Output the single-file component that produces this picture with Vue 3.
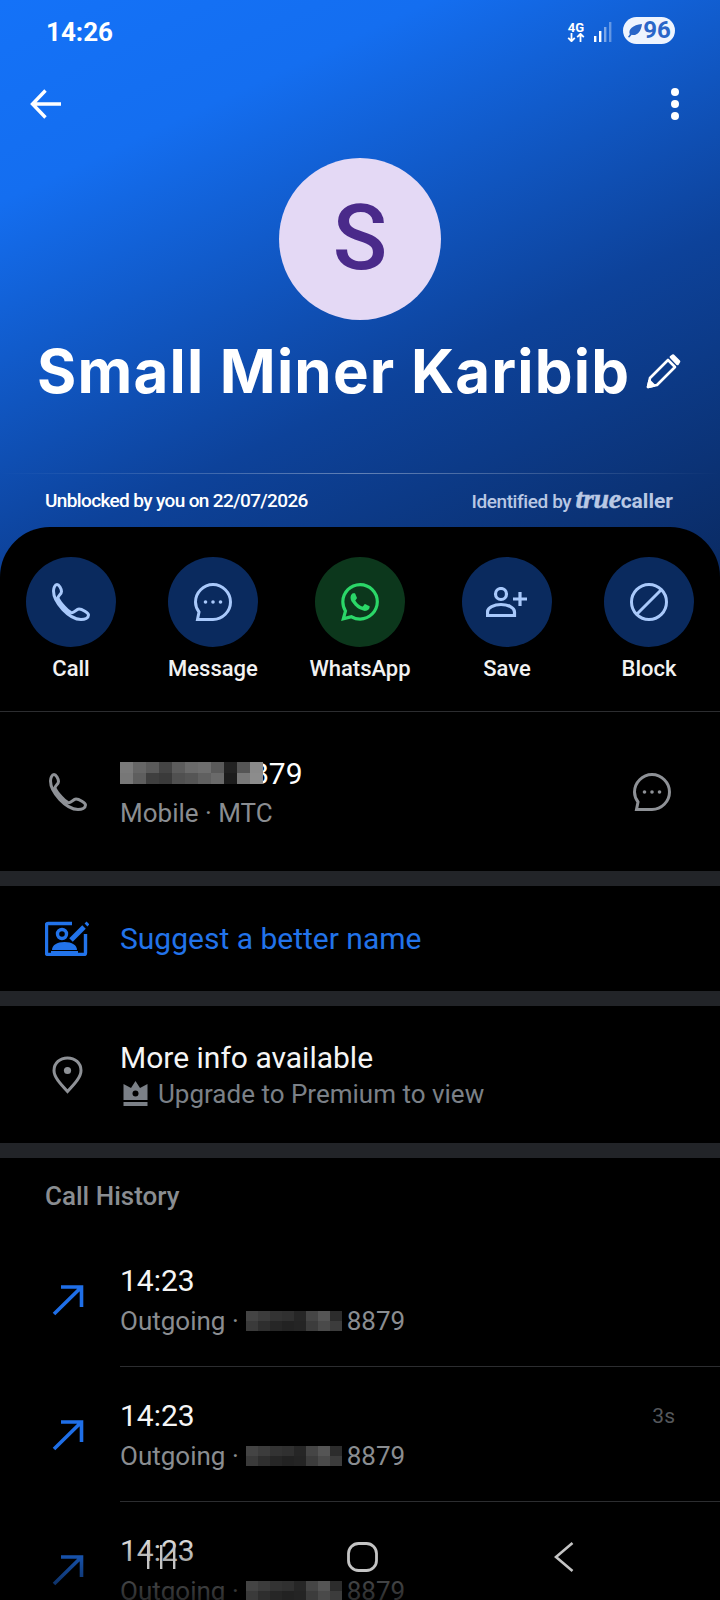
<template>
  <div class="screen">
    <header class="hero">
      <div class="status">
        <span class="clock">14:26</span>
        <div class="status-right">
          <div class="net">
            <span>4G</span>
            <svg width="18" height="9" viewBox="0 0 18 9" fill="none" stroke="#fff" stroke-width="1.8">
              <path d="M4.5 0v8M1.2 4.8l3.3 3.4 3.3-3.4M13.5 9V1M10.2 4.2l3.3-3.4 3.3 3.4" />
            </svg>
          </div>
          <svg class="signal" width="18" height="20" viewBox="0 0 18 20" fill="#fff">
            <rect x="0" y="14" width="2.4" height="6" />
            <rect x="5" y="9" width="2.4" height="11" />
            <rect x="10" y="5" width="2.4" height="15" opacity=".45" />
            <rect x="15" y="0" width="2.4" height="20" opacity=".35" />
          </svg>
          <div class="battery">
            <svg width="15" height="15" viewBox="0 0 16 16" fill="#2a66c8">
              <path d="M1 15 3 12C1 7 6 2 16 1 15 10 10 14 5 12.500L2.500 15.500Z" />
            </svg>
            <span>96</span>
          </div>
        </div>
      </div>

      <div class="toolbar">
        <svg width="32" height="30" viewBox="0 0 32 30" fill="none" stroke="#fff" stroke-width="3.4">
          <path d="M31 15H3M15.500 1.500 2.500 15l13 13.500" />
        </svg>
        <div class="dots"><i></i><i></i><i></i></div>
      </div>

      <div class="avatar">S</div>

      <div class="title-row">
        <h1>Small Miner Karibib</h1>
        <svg width="35" height="35" viewBox="0 0 35 35" fill="none" stroke="#fff" stroke-width="2.600" stroke-linejoin="round">
          <path d="M2 33 4 24 22 6 29 13 11 31Z" />
          <path d="M25 3 27 1.500 33 7.500 31.500 10Z" fill="#fff" />
          <path d="M2 33 3.500 27 8 31.500Z" fill="#fff" />
        </svg>
      </div>

      <div class="hero-line"></div>

      <div class="meta">
        <span class="unblocked">Unblocked by you on 22/07/2026</span>
        <span class="identified">Identified by <em>true</em><b>caller</b></span>
      </div>
    </header>

    <main class="sheet">
      <section class="actions">
        <div class="action">
          <div class="circle">
            <svg width="38" height="38" viewBox="0 0 38 38" fill="none" stroke="#a9c9fb" stroke-width="3">
              <path :d="phonePath" />
            </svg>
          </div>
          <span>Call</span>
        </div>
        <div class="action">
          <div class="circle">
            <svg width="38" height="38" viewBox="0 0 38 38" fill="none" stroke="#a9c9fb" stroke-width="3">
              <path :d="bubblePath" />
              <g fill="#a9c9fb" stroke="none">
                <circle cx="11.500" cy="19" r="1.800" />
                <circle cx="19" cy="19" r="1.800" />
                <circle cx="26.500" cy="19" r="1.800" />
              </g>
            </svg>
          </div>
          <span>Message</span>
        </div>
        <div class="action">
          <div class="circle green">
            <svg width="38" height="38" viewBox="0 0 24 24" fill="#2bd768">
              <path d="M17.472 14.382c-.297-.149-1.758-.867-2.03-.967-.273-.099-.471-.148-.67.15-.197.297-.767.966-.94 1.164-.173.199-.347.223-.644.075-.297-.15-1.255-.463-2.39-1.475-.883-.788-1.48-1.761-1.653-2.059-.173-.297-.018-.458.13-.606.134-.133.298-.347.446-.52.149-.174.198-.298.298-.497.099-.198.05-.371-.025-.52-.075-.149-.669-1.612-.916-2.207-.242-.579-.487-.5-.669-.51-.173-.008-.371-.01-.57-.01-.198 0-.52.074-.792.372-.272.297-1.04 1.016-1.04 2.479 0 1.462 1.065 2.875 1.213 3.074.149.198 2.096 3.2 5.077 4.487.709.306 1.262.489 1.694.625.712.227 1.36.195 1.871.118.571-.085 1.758-.719 2.006-1.413.248-.694.248-1.289.173-1.413-.074-.124-.272-.198-.57-.347m-5.421 7.403h-.004a9.87 9.87 0 01-5.031-1.378l-.361-.214-3.741.982.998-3.648-.235-.374a9.86 9.86 0 01-1.51-5.26c.001-5.45 4.436-9.884 9.888-9.884 2.64 0 5.122 1.03 6.988 2.898a9.825 9.825 0 012.893 6.994c-.003 5.45-4.437 9.884-9.885 9.884m8.413-18.297A11.815 11.815 0 0012.05 0C5.495 0 .16 5.335.157 11.892c0 2.096.547 4.142 1.588 5.945L.057 24l6.305-1.654a11.882 11.882 0 005.683 1.448h.005c6.554 0 11.89-5.335 11.893-11.893a11.821 11.821 0 00-3.48-8.413z" />
            </svg>
          </div>
          <span>WhatsApp</span>
        </div>
        <div class="action">
          <div class="circle">
            <svg width="42" height="30" viewBox="0 0 42 30" fill="none" stroke="#a9c9fb" stroke-width="3.200">
              <circle cx="15" cy="7" r="5.500" />
              <path d="M1.500 28.500V25C1.500 20.500 8 17.500 15 17.500S28.500 20.500 28.500 25V28.500Z" />
              <path d="M34 5v14M27 12h14" />
            </svg>
          </div>
          <span>Save</span>
        </div>
        <div class="action">
          <div class="circle">
            <svg width="38" height="38" viewBox="0 0 38 38" fill="none" stroke="#a9c9fb" stroke-width="3">
              <circle cx="19" cy="19" r="17.500" />
              <path d="M7 31 31 7" />
            </svg>
          </div>
          <span>Block</span>
        </div>
      </section>

      <section class="row phone-row">
        <div class="row-icon">
          <svg width="38" height="38" viewBox="0 0 38 38" fill="none" stroke="#8e9196" stroke-width="3">
            <path :d="phonePath" />
          </svg>
        </div>
        <div class="row-body">
          <div class="number">
            <div class="mosaic">
              <i v-for="(c, i) in phoneCells" :key="i" :style="{ background: c }"></i>
            </div>
            <span>879</span>
          </div>
          <div class="sub">Mobile · MTC</div>
        </div>
        <svg class="row-end" width="38" height="38" viewBox="0 0 38 38" fill="none" stroke="#8e9196" stroke-width="3">
          <path :d="bubblePath" />
          <g fill="#8e9196" stroke="none">
            <circle cx="11.500" cy="19" r="1.800" />
            <circle cx="19" cy="19" r="1.800" />
            <circle cx="26.500" cy="19" r="1.800" />
          </g>
        </svg>
      </section>

      <div class="band"></div>

      <section class="row suggest-row">
        <div class="row-icon suggest-icon">
          <svg width="44" height="35" viewBox="0 0 44 35" fill="none" stroke="#2273ea" stroke-width="3.400">
            <path d="M27 2.500H3Q1.500 2.500 1.500 4V32Q1.500 33.500 3 33.500H39Q40.500 33.500 40.500 32V13" />
            <circle cx="17" cy="13" r="4.500" />
            <path d="M7 29C7 24 12 21 19.500 21S32 24 32 29Z" fill="#2273ea" stroke="none" />
            <path d="M6 31H33" stroke-width="2" />
            <path d="M26 19 39 6" stroke-width="5" />
            <path d="M41 4 43 2" stroke-width="4" />
          </svg>
        </div>
        <span class="suggest">Suggest a better name</span>
      </section>

      <div class="band"></div>

      <section class="row more-row">
        <div class="row-icon pin-icon">
          <svg width="31" height="38" viewBox="0 0 31 38" fill="none" stroke="#8e9196" stroke-width="3">
            <path d="M15.500 35.500C8 27.500 2 21 2 14.500 2 7 8 2 15.500 2S29 7 29 14.500C29 21 23 27.500 15.500 35.500Z" />
            <circle cx="15.500" cy="14.500" r="3.600" fill="#8e9196" stroke="none" />
          </svg>
        </div>
        <div class="row-body">
          <div class="main">More info available</div>
          <div class="sub upgrade">
            <svg width="25" height="25" viewBox="0 0 24 25" fill="#7b8087">
              <path d="M12 0 16.500 7 24 3V19H0V3L7.500 7Z" />
              <circle cx="12" cy="12.500" r="3" fill="#000" />
              <rect y="21" width="24" height="4" />
            </svg>
            Upgrade to Premium to view
          </div>
        </div>
      </section>

      <div class="band"></div>

      <h2 class="history-title">Call History</h2>

      <div v-for="(call, i) in calls" :key="i" class="call">
        <div class="call-icon">
          <svg width="32" height="32" viewBox="0 0 32 32" fill="none" stroke="#1f6fe8" stroke-width="3.600">
            <path d="M2 30 29.500 3M9 3H29.500V23" />
          </svg>
        </div>
        <div class="call-body">
          <div class="call-text">
            <div class="main">{{ call.time }}</div>
            <div class="sub out">
              <span>Outgoing ·</span>
              <div class="mosaic small">
                <i v-for="(c, j) in callCells" :key="j" :style="{ background: c }"></i>
              </div>
              <span>8879</span>
            </div>
          </div>
          <span class="duration">{{ call.duration }}</span>
        </div>
      </div>
    </main>

    <div class="fade"></div>
    <nav class="navbar">
      <svg width="30" height="24" viewBox="0 0 30 24" fill="#c4c4c4">
        <rect x="1" width="2.400" height="24" />
        <rect x="14" width="2.400" height="24" />
        <rect x="27" width="2.400" height="24" />
      </svg>
      <svg width="31" height="30" viewBox="0 0 31 30" fill="none" stroke="#c4c4c4" stroke-width="2.800">
        <rect x="1.500" y="1.500" width="28" height="27" rx="10" />
      </svg>
      <svg class="nav-back" width="20" height="30" viewBox="0 0 20 30" fill="none" stroke="#c4c4c4" stroke-width="2.600">
        <path d="M18.500 1 2 15l16.500 14" />
      </svg>
    </nav>
  </div>
</template>

<script setup>
const phonePath = "M5 1.500C7 1.500 9.500 6 9.500 8.500 9.500 11 6.500 12 6 14.500 6 17 14 27 19 29.500 22 31 24 26 27 26 30 26 36.500 30 36.500 32 36.500 35 33 36.500 29 36.500 17 36.500 1.500 19 1.500 8 1.500 5 3 1.500 5 1.500Z"
const bubblePath = "M19 1.500C28.500 1.500 36.500 9.500 36.500 19S28.500 36.500 19 36.500H3.500L5 29C2.800 26 1.500 23 1.500 19 1.500 9.500 9.500 1.500 19 1.500Z"

const phoneCells = [
  "#7a7a7a", "#666", "#5a5a5a", "#444", "#5c5c5c", "#6a6a6a", "#6e6e6e", "#5a5a5a", "#222", "#555", "#8a8a8a",
  "#777", "#5e5e5e", "#3f3f3f", "#3a3a3a", "#505050", "#555", "#606060", "#6a6a6a", "#1c1c1c", "#787878", "#8c8c8c",
]
const callCells = [
  "#444", "#3c3c3c", "#333", "#303030", "#262626", "#454545", "#555", "#2c2c2c",
  "#3a3a3a", "#2e2e2e", "#262626", "#222", "#242424", "#3c3c3c", "#4a4a4a", "#3c3c3c",
]
const calls = [
  { time: "14:23", duration: "" },
  { time: "14:23", duration: "3s" },
  { time: "14:23", duration: "" },
]
</script>

<style>
body {
  background: #000;
}
</style>

<style scoped>
.screen {
  position: relative;
  width: 720px;
  height: 1600px;
  overflow: hidden;
  background-color: #000;
  background-image: linear-gradient(155deg, #1472f8 0%, #146ef0 22%, #0d429a 62%, #0a2a62 100%);
  background-size: 100% 580px;
  background-repeat: no-repeat;
  font-family: Roboto, "Liberation Sans", sans-serif;
  color: #fff;
}

/* Top area */

.hero {
  height: 527px;
}

.status {
  height: 64px;
  padding: 0 45px 0 46px;
  display: flex;
  justify-content: space-between;
  align-items: center;
}

.clock {
  font-size: 26px;
  font-weight: 700;
}

.status-right {
  display: flex;
  align-items: center;
}

.net {
  width: 18px;
  display: flex;
  flex-direction: column;
  align-items: center;
  font-size: 13px;
  font-weight: 700;
  line-height: 11px;
  margin-right: 9px;
}

.signal {
  margin-right: 11px;
}

.battery {
  width: 52px;
  height: 27px;
  border-radius: 14px;
  background: #eef4fe;
  display: flex;
  align-items: center;
  justify-content: center;
  gap: 1px;
  color: #2a66c8;
  font-size: 24px;
  font-weight: 700;
  margin-top: -4px;
}

.toolbar {
  height: 80px;
  padding: 0 41px 0 30px;
  display: flex;
  justify-content: space-between;
  align-items: center;
}

.dots {
  display: flex;
  flex-direction: column;
  gap: 4px;
}

.dots i {
  width: 8px;
  height: 8px;
  border-radius: 50%;
  background: #fff;
}

.avatar {
  width: 162px;
  height: 162px;
  margin: 14px auto 0;
  border-radius: 50%;
  background: #e4d9f5;
  color: #4a2a8a;
  font-size: 90px;
  font-weight: 500;
  line-height: 162px;
  text-align: center;
}

.title-row {
  height: 80px;
  margin-top: 11px;
  padding-left: 37px;
  display: flex;
  align-items: center;
  gap: 16px;
}

h1 {
  margin: 0;
  font-family: Inter, "Liberation Sans", sans-serif;
  font-size: 60px;
  font-weight: 700;
  letter-spacing: 1.2px;
  white-space: nowrap;
}

.hero-line {
  height: 1px;
  margin-top: 62px;
  background: linear-gradient(90deg, transparent, rgba(255, 255, 255, 0.35) 50%, transparent);
}

.meta {
  height: 53px;
  padding: 0 47px 0 45px;
  display: flex;
  justify-content: space-between;
  align-items: center;
  font-size: 19px;
}

.unblocked {
  font-weight: 500;
  letter-spacing: -0.63px;
}

.identified {
  color: #b9c8e4;
  font-weight: 500;
  letter-spacing: -0.4px;
}

.identified em {
  font-family: "Liberation Serif", serif;
  font-size: 28px;
  font-weight: 700;
  font-style: italic;
  line-height: 20px;
  -webkit-text-stroke: 0.5px #b9c8e4;
}

.identified b {
  font-size: 21px;
  font-weight: 700;
  letter-spacing: 0;
}

/* Black sheet */

.sheet {
  border-radius: 50px 50px 0 0;
  background: #000;
  height: 1073px;
}

.actions {
  display: grid;
  grid-template-columns: 142px 142px 152px 142px 142px;
  padding: 30px 0 28px;
  border-bottom: 1px solid #2c2d30;
}

.action {
  display: flex;
  flex-direction: column;
  align-items: center;
  font-size: 22px;
  font-weight: 500;
  line-height: 28px;
  color: #f2f2f2;
}

.circle {
  width: 90px;
  height: 90px;
  margin-bottom: 8px;
  border-radius: 50%;
  background: #0a2a5e;
  display: flex;
  align-items: center;
  justify-content: center;
}

.circle.green {
  background: #0c371c;
}

.row {
  display: flex;
  align-items: center;
  padding-right: 49px;
}

.row-icon {
  width: 120px;
  flex: none;
  padding-left: 49px;
  box-sizing: border-box;
  display: flex;
}

.row-body {
  flex: 1;
}

.phone-row {
  height: 159px;
}

.phone-row .row-body {
  padding-top: 3px;
}

.phone-row .sub {
  margin-top: 6px;
}

.suggest-row {
  height: 105px;
}

.suggest-icon {
  padding-left: 45px;
}

.more-row {
  height: 137px;
}

.more-row .row-body {
  padding-top: 2px;
}

.pin-icon {
  padding-left: 52px;
}

.band {
  height: 15px;
  background: #222428;
}

.number {
  display: flex;
  align-items: center;
  height: 34px;
  font-size: 30px;
}

.number span {
  margin-left: -11px;
}

.mosaic {
  position: relative;
  z-index: 1;
  display: grid;
  grid-template-columns: repeat(11, 13px);
  grid-auto-rows: 11px;
}

.mosaic.small {
  grid-template-columns: repeat(8, 12px);
  grid-auto-rows: 10px;
  margin: 0 5px 0 7px;
}

.main {
  font-size: 30px;
  line-height: 34px;
  color: #f5f5f5;
}

.sub {
  font-size: 26px;
  line-height: 34px;
  margin-top: 6px;
  color: #8a8d91;
}

.suggest {
  font-size: 30px;
  color: #2273ea;
}

.upgrade {
  display: flex;
  align-items: center;
  gap: 10px;
  margin-top: 2px;
  padding-left: 3px;
  color: #7b8087;
}

.history-title {
  margin: 0;
  height: 75px;
  padding: 23px 0 0 45px;
  box-sizing: border-box;
  font-size: 26px;
  line-height: 30px;
  font-weight: 500;
  color: #8a8d91;
}

.call {
  display: flex;
  align-items: flex-start;
  height: 135px;
}

.call-icon {
  width: 120px;
  flex: none;
  padding: 51px 0 0 52px;
  box-sizing: border-box;
}

.call-body {
  flex: 1;
  height: 134px;
  box-sizing: border-box;
  display: flex;
  justify-content: space-between;
  padding: 31px 45px 0 0;
  border-bottom: 1px solid #2c2d30;
}

.out {
  display: flex;
  align-items: center;
}

.duration {
  font-size: 21px;
  line-height: 34px;
  color: #55585c;
}

/* Nav bar lies over the list */

.fade {
  position: absolute;
  left: 0;
  right: 0;
  bottom: 0;
  height: 70px;
  background: linear-gradient(180deg, transparent, rgba(0, 0, 0, 0.7));
}

.navbar {
  position: absolute;
  left: 146px;
  top: 1542px;
  height: 30px;
  display: flex;
  gap: 171px;
  align-items: center;
}

.nav-back {
  margin-left: 5px;
}
</style>
